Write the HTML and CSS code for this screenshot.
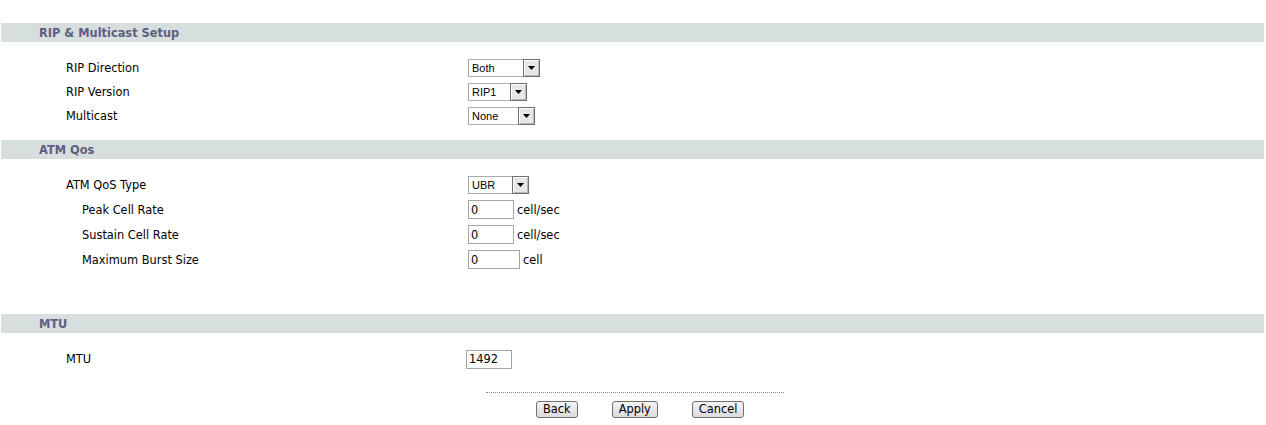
FILE: index.html
```html
<!DOCTYPE html>
<html>
<head>
<meta charset="utf-8">
<title>RIP &amp; Multicast Setup</title>
<link rel="stylesheet" href="styles.css">
</head>
<body>
<div class="page">
  <section class="sec">
    <h2 class="bar">RIP &amp; Multicast Setup</h2>
    <div class="rows rows-24">
      <div class="row"><span class="lbl">RIP Direction</span><span class="sel w72"><span class="sel-text">Both</span><span class="sel-btn"><svg width="7" height="4" viewBox="0 0 7 4"><path d="M0 0H7L3.5 4Z" fill="#000"/></svg></span></span></div>
      <div class="row"><span class="lbl">RIP Version</span><span class="sel w59"><span class="sel-text">RIP1</span><span class="sel-btn"><svg width="7" height="4" viewBox="0 0 7 4"><path d="M0 0H7L3.5 4Z" fill="#000"/></svg></span></span></div>
      <div class="row"><span class="lbl">Multicast</span><span class="sel w67"><span class="sel-text">None</span><span class="sel-btn"><svg width="7" height="4" viewBox="0 0 7 4"><path d="M0 0H7L3.5 4Z" fill="#000"/></svg></span></span></div>
    </div>
  </section>

  <section class="sec">
    <h2 class="bar">ATM Qos</h2>
    <div class="rows rows-25 rows-tall">
      <div class="row"><span class="lbl">ATM QoS Type</span><span class="sel w61"><span class="sel-text">UBR</span><span class="sel-btn"><svg width="7" height="4" viewBox="0 0 7 4"><path d="M0 0H7L3.5 4Z" fill="#000"/></svg></span></span></div>
      <div class="row"><span class="lbl sub">Peak Cell Rate</span><input class="txt" type="text" value="0"><span class="unit">cell/sec</span></div>
      <div class="row"><span class="lbl sub">Sustain Cell Rate</span><input class="txt" type="text" value="0"><span class="unit">cell/sec</span></div>
      <div class="row"><span class="lbl sub">Maximum Burst Size</span><input class="txt txt-wide" type="text" value="0"><span class="unit">cell</span></div>
    </div>
  </section>

  <section class="sec">
    <h2 class="bar">MTU</h2>
    <div class="rows rows-25 rows-mtu">
      <div class="row"><span class="lbl lbl-mtu">MTU</span><input class="txt" type="text" value="1492"></div>
    </div>
  </section>

  <div class="footer">
    <div class="divider"></div>
    <div class="actions">
      <button class="btn" type="button">Back</button>
      <button class="btn" type="button">Apply</button>
      <button class="btn" type="button">Cancel</button>
    </div>
  </div>
</div>
</body>
</html>
```

FILE: styles.css
```css
html, body {
  margin: 0;
  padding: 0;
  background: #fff;
}

body {
  font-family: "DejaVu Sans", Verdana, sans-serif;
  font-size: 11.4px;
  color: #000;
}

.page {
  padding: 23px 2px 0 1px;
  border-left: 1px solid #f0f0f0;
  margin-left: -1px;
}

.bar {
  margin: 0;
  height: 19px;
  line-height: 20px;
  background: #d7dfde;
  color: #5e5e80;
  font-size: 11.4px;
  font-weight: bold;
  padding-left: 38px;
}

.rows {
  display: flex;
  flex-direction: column;
  padding: 13px 0;
}

.rows-tall {
  padding-bottom: 42px;
}

.rows-mtu {
  padding-bottom: 0;
}

.row {
  display: flex;
  align-items: center;
  padding-left: 65px;
}

.rows-24 .row {
  height: 24px;
  padding-top: 1px;
  box-sizing: border-box;
}

.rows-25 .row { height: 25px; }

.rows-mtu .row {
  height: 25px;
  padding-top: 1px;
  box-sizing: border-box;
}

.lbl {
  width: 402px;
  flex: none;
}

.lbl.sub {
  padding-left: 16px;
  width: 386px;
}

.lbl.lbl-mtu {
  width: 400px;
}

/* custom select */
.sel {
  display: inline-flex;
  align-items: stretch;
  height: 16px;
  border: 1px solid #a5acb2;
  border-right: none;
  background: #fff;
  box-sizing: content-box;
}

.w72 { width: 71px; }
.w59 { width: 58px; }
.w67 { width: 66px; }
.w61 { width: 60px; }

.sel-text {
  flex: 1;
  font-family: "Liberation Sans", Arial, sans-serif;
  font-size: 11px;
  line-height: 16px;
  padding-left: 3px;
  color: #000;
}

.sel-btn {
  flex: none;
  width: 15px;
  margin: -1px 0;
  border: 1px solid #6f6f6f;
  background: #e6e6e6;
  box-shadow: inset 1px 1px #ffffff, inset -1px -1px #b8b8b8;
  display: flex;
  align-items: center;
  justify-content: center;
}

.sel-btn svg {
  display: block;
  margin-top: 1px;
}

/* text inputs */
.txt {
  box-sizing: border-box;
  width: 46px;
  height: 19px;
  margin: 0;
  padding: 0 0 0 2px;
  border: 1px solid #a5a5a5;
  font-family: "DejaVu Sans", Verdana, sans-serif;
  font-size: 11.4px;
  color: #000;
  background: #fff;
  outline: none;
}

.txt-wide {
  width: 52px;
}

.unit {
  margin-left: 3px;
}

/* footer */
.footer {
  margin-left: 485px;
  width: 298px;
  padding-top: 21px;
}

.divider {
  border-top: 1px dotted #8a8a8a;
}

.actions {
  display: flex;
  gap: 34px;
  padding-left: 50px;
  padding-top: 8px;
}

.btn {
  box-sizing: border-box;
  height: 17px;
  margin: 0;
  padding: 0 6px;
  border: 1px solid #707070;
  border-radius: 3px;
  background: linear-gradient(#f4f4f4, #dcdcdc);
  font-family: "DejaVu Sans", Verdana, sans-serif;
  font-size: 11.4px;
  line-height: 15px;
  color: #000;
}
```
